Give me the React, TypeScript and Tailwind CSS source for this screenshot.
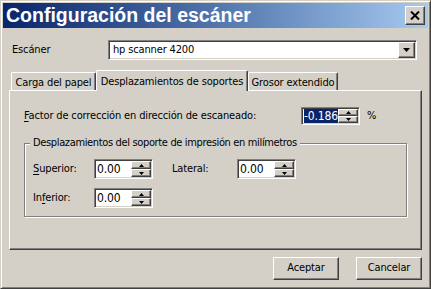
import React from 'react';

const font = {
  fontFamily: '"DejaVu Sans Condensed", "Liberation Sans", Arial, sans-serif',
  letterSpacing: '-0.15px',
};

// classic 3D edges
const raised =
  'border border-t-white border-l-white border-r-[#404040] border-b-[#404040] shadow-[inset_-1px_-1px_0_#808080] bg-[#d4d0c8]';
const sunken =
  'border border-t-[#808080] border-l-[#808080] border-r-white border-b-white shadow-[inset_1px_1px_0_#404040,inset_-1px_-1px_0_#d4d0c8]';

function Arrow({ up = false, w = 7 }: { up?: boolean; w?: number }) {
  const h = Math.ceil(w / 2);
  return (
    <svg width={w} height={h} viewBox={`0 0 ${w} ${h}`} className="block">
      <polygon
        points={up ? `0,${h} ${w},${h} ${w / 2},0` : `0,0 ${w},0 ${w / 2},${h}`}
        fill="#000"
      />
    </svg>
  );
}

function Spin({ value, selected = false, h = 20 }: { value: string; selected?: boolean; h?: number }) {
  return (
    <div className={`${sunken} flex w-[59px] bg-white p-[1px]`} style={{ height: h }}>
      <div className="flex flex-1 items-center overflow-hidden pl-[1px] text-[12px] leading-none">
        {selected ? <span className="bg-[#0a246a] py-[1px] text-white">{value}</span> : value}
      </div>
      <div className="flex w-[20px] flex-col">
        <div className={`${raised} flex flex-1 items-center justify-center`}>
          <Arrow up w={5} />
        </div>
        <div className={`${raised} flex flex-1 items-center justify-center`}>
          <Arrow w={5} />
        </div>
      </div>
    </div>
  );
}

function Tab({ label, active = false, w }: { label: string; active?: boolean; w: number }) {
  if (active) {
    return (
      <div
        className="relative z-10 -mb-[1px] flex h-[21px] items-start justify-center rounded-t-[2px] border-t border-l border-r border-t-white border-l-white border-r-[#404040] bg-[#d4d0c8] pt-[3px] shadow-[inset_-1px_0_0_#808080]"
        style={{ width: w }}
      >
        {label}
      </div>
    );
  }
  return (
    <div
      className="flex h-[18px] items-start justify-center rounded-t-[2px] border-t border-l border-r border-t-white border-l-white border-r-[#404040] pt-[2px] shadow-[inset_-1px_0_0_#808080]"
      style={{ width: w }}
    >
      {label}
    </div>
  );
}

export default function App() {
  return (
    <div
      className="h-[289px] w-[431px] whitespace-nowrap border border-t-[#d4d0c8] border-l-[#d4d0c8] border-r-[#404040] border-b-[#404040] bg-[#d4d0c8] p-[2px] text-[11px] text-black shadow-[inset_1px_1px_0_#fff,inset_-1px_-1px_0_#808080]"
      style={font}
    >
      {/* Title bar */}
      <div className="flex h-[25px] items-center justify-between bg-linear-to-r from-[#0a246a] to-[#a6caf0]">
        <span
          className="pl-[3px] text-[19.5px] font-bold leading-none tracking-normal text-white"
          style={{ fontFamily: '"Liberation Sans", Arial, sans-serif' }}
        >
          Configuración del escáner
        </span>
        <button className={`${raised} mr-[3px] flex h-[19px] w-[20px] items-center justify-center p-0`}>
          <svg width="10" height="9" viewBox="0 0 10 9">
            <path d="M1 0.5 L9 8.5 M9 0.5 L1 8.5" stroke="#000" strokeWidth="2" />
          </svg>
        </button>
      </div>

      <div className="flex flex-col px-[6px]">
        {/* Scanner select */}
        <div className="mt-[12px] flex h-[20px] items-center">
          <span className="w-[99px] pl-[3px]">Escáner</span>
          <div className={`${sunken} flex h-[20px] w-[309px] items-stretch bg-white p-[1px]`}>
            <div className="flex flex-1 items-center pl-[3px]">hp scanner 4200</div>
            <div className={`${raised} flex w-[17px] items-center justify-center`}>
              <Arrow w={7} />
            </div>
          </div>
        </div>

        {/* Tabs */}
        <div className="mt-[10px] flex h-[20px] items-end pl-[2px]">
          <Tab label="Carga del papel" w={85} />
          <Tab label="Desplazamientos de soportes" active w={152} />
          <Tab label="Grosor extendido" w={90} />
        </div>

        {/* Panel */}
        <div className="flex h-[160px] flex-col border border-t-white border-l-white border-r-[#404040] border-b-[#404040] pl-[14px] shadow-[inset_-1px_-1px_0_#808080]">
          <div className="mt-[16px] flex h-[18px] items-center">
            <span className="w-[277px]">
              <span className="underline underline-offset-2">F</span>actor de corrección en dirección de escaneado:
            </span>
            <Spin value="-0.186" selected h={18} />
            <span className="ml-[7px]">%</span>
          </div>

          <fieldset className="mt-[11px] h-[81px] w-[383px] border border-[#808080] shadow-[inset_1px_1px_0_#fff,1px_1px_0_#fff]">
            <legend className="ml-[5px] bg-[#d4d0c8] px-[3px] leading-[14px] tracking-[-0.35px]">
              Desplazamientos del soporte de impresión en milímetros
            </legend>
            <div className="mt-[9px] flex h-[20px] items-center pl-[8px]">
              <span className="w-[61px]">
                <span className="underline underline-offset-2">S</span>uperior:
              </span>
              <Spin value="0.00" />
              <span className="ml-[19px] w-[65px]">Lateral:</span>
              <Spin value="0.00" />
            </div>
            <div className="mt-[9px] flex h-[20px] items-center pl-[8px]">
              <span className="w-[61px]">
                In<span className="underline underline-offset-2">f</span>erior:
              </span>
              <Spin value="0.00" />
            </div>
          </fieldset>
        </div>

        {/* Buttons */}
        <div className="mt-[7px] flex justify-end gap-[17px]">
          <button className={`${raised} h-[23px] w-[66px]`}>Aceptar</button>
          <button className={`${raised} h-[23px] w-[66px]`}>Cancelar</button>
        </div>
      </div>
    </div>
  );
}
